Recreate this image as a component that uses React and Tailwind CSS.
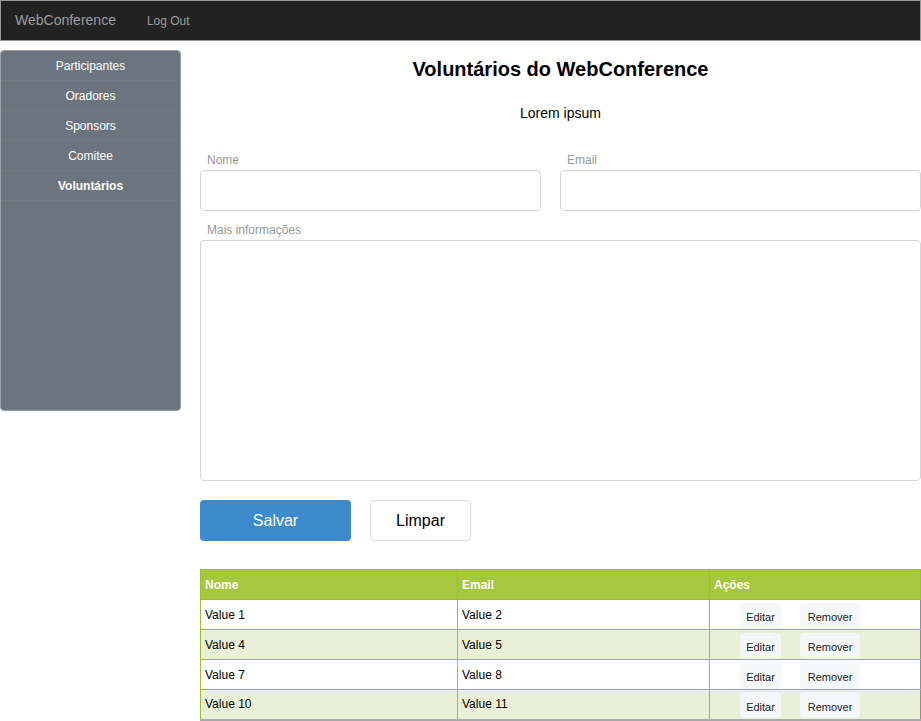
import React from 'react';

const menu = ['Participantes', 'Oradores', 'Sponsors', 'Comitee', 'Voluntários'];

const rows = [
  ['Value 1', 'Value 2'],
  ['Value 4', 'Value 5'],
  ['Value 7', 'Value 8'],
  ['Value 10', 'Value 11'],
];

const App = () => {
  return (
    <div className="min-h-[721px] bg-white font-['Liberation_Sans',Arial,sans-serif] text-black">
      {/* Top bar */}
      <div className="flex h-[41px] items-center border border-[#9a9a9a] bg-[#222222]">
        <span className="ml-[14px] text-[14px] text-[#9d9d9d]">WebConference</span>
        <span className="ml-[31px] text-[12px] text-[#9d9d9d]">Log Out</span>
      </div>

      <div className="flex gap-[19px] pt-[9px]">
        {/* Sidebar */}
        <div className="h-[361px] w-[181px] shrink-0 overflow-hidden rounded-[4px] border border-[#9aa1a6] bg-[#6c757d]">
          {menu.map((item, i) => (
            <div
              key={item}
              className={`flex h-[30px] items-center justify-center border-b border-[#707a81] text-[12px] text-white ${
                i === menu.length - 1 ? 'font-bold' : ''
              }`}
            >
              {item}
            </div>
          ))}
        </div>

        {/* Content */}
        <div className="flex-1 pt-[5px]">
          <h1 className="text-center text-[20px] font-bold leading-[28px]">Voluntários do WebConference</h1>
          <p className="mt-[20px] text-center text-[14px] leading-[20px]">Lorem ipsum</p>

          <div className="mt-[29px] flex gap-[19px]">
            <div className="w-[341px] shrink-0">
              <label className="block pl-[7px] text-[12px] leading-[16px] text-[#999]">Nome</label>
              <input className="mt-[2px] block h-[41px] w-full rounded-[4px] border border-[#d5d5d5]" />
            </div>
            <div className="flex-1">
              <label className="block pl-[7px] text-[12px] leading-[16px] text-[#999]">Email</label>
              <input className="mt-[2px] block h-[41px] w-full rounded-[4px] border border-[#d5d5d5]" />
            </div>
          </div>

          <div className="mt-[11px]">
            <label className="block pl-[7px] text-[12px] leading-[16px] text-[#999]">Mais informações</label>
            <textarea className="mt-[2px] block h-[241px] w-full resize-none rounded-[4px] border border-[#d5d5d5]" />
          </div>

          <div className="mt-[19px] flex gap-[19px]">
            <button className="h-[41px] w-[151px] rounded-[4px] bg-[#3d8bcd] text-[16px] text-white">Salvar</button>
            <button className="h-[41px] w-[101px] rounded-[4px] border border-[#dcdcdc] bg-white text-[16px] text-black">
              Limpar
            </button>
          </div>

          <table className="mt-[28px] w-full border-collapse border-b-2 border-b-[#a9a9a9] text-left text-[12px]">
            <thead>
              <tr className="h-[30px] bg-[#a6c83f] text-white">
                <th className="w-[257px] border border-[#9bbf30] px-[4px] font-bold">Nome</th>
                <th className="w-[252px] border border-[#9bbf30] px-[4px] font-bold">Email</th>
                <th className="border border-[#9bbf30] px-[4px] font-bold">Ações</th>
              </tr>
            </thead>
            <tbody>
              {rows.map((r, i) => (
                <tr key={i} className={`h-[30px] ${i % 2 ? 'bg-[#e9f0d6]' : 'bg-white'}`}>
                  <td className="border border-[#9bbf30] px-[4px]">{r[0]}</td>
                  <td className="border border-[#9bbf30] px-[4px]">{r[1]}</td>
                  <td className="border border-[#9bbf30] border-r-[#8f8f8f] px-0">
                    <div className="flex gap-[19px] pl-[30px] pt-[2px]">
                      <button className="h-[26px] w-[41px] rounded-[4px] bg-[#f6f7f9] pt-[3px] text-[11px] text-[#222]">Editar</button>
                      <button className="h-[26px] w-[60px] rounded-[4px] bg-[#f6f7f9] pt-[3px] text-[11px] text-[#222]">Remover</button>
                    </div>
                  </td>
                </tr>
              ))}
            </tbody>
          </table>
        </div>
      </div>
    </div>
  );
};

export default App;
